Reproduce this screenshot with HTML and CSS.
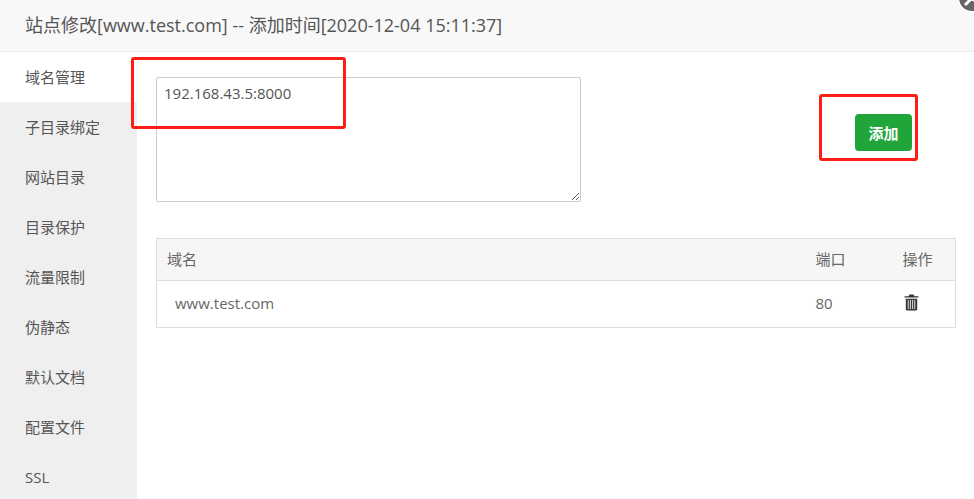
FILE: index.html
```html
<!DOCTYPE html>
<html lang="zh-CN">
<head>
    <meta charset="UTF-8">
    <title>站点修改</title>
    <link rel="stylesheet" href="styles.css">
</head>
<body>
    <div class="layer">
        <div class="layer-title">站点修改[www.test.com] -- 添加时间[2020-12-04 15:11:37]</div>
        <div class="layer-body">
            <ul class="side-menu">
                <li class="on">域名管理</li>
                <li>子目录绑定</li>
                <li>网站目录</li>
                <li>目录保护</li>
                <li>流量限制</li>
                <li>伪静态</li>
                <li>默认文档</li>
                <li>配置文件</li>
                <li>SSL</li>
            </ul>
            <div class="main">
                <div class="add-row">
                    <textarea class="domain-input">192.168.43.5:8000</textarea>
                    <button class="btn-add">添加</button>
                </div>
                <table class="domain-table">
                    <thead>
                        <tr>
                            <th class="col-name">域名</th>
                            <th class="col-port">端口</th>
                            <th class="col-op">操作</th>
                        </tr>
                    </thead>
                    <tbody>
                        <tr>
                            <td class="col-name"><span class="domain-link">www.test.com</span></td>
                            <td class="col-port">80</td>
                            <td class="col-op">
                                <svg class="trash" viewBox="0 0 14 16" width="15" height="17">
                                    <path d="M5 0.5h4l0.6 1.5H13.5v1.4H0.5V2H4.4z" fill="#333"/>
                                    <path d="M1.6 4.4h10.8V14.4a1.2 1.2 0 0 1-1.2 1.2H2.8a1.2 1.2 0 0 1-1.2-1.2z" fill="#3a3a3a"/>
                                    <path d="M4 5.6v8.6M6 5.6v8.6M8 5.6v8.6M10 5.6v8.6" stroke="#ccc" stroke-width="1"/>
                                </svg>
                            </td>
                        </tr>
                    </tbody>
                </table>
            </div>
        </div>
        <div class="mark mark-input"></div>
        <div class="mark mark-btn"></div>
        <div class="close-btn">
            <svg viewBox="0 0 30 30" width="30" height="30">
                <path d="M8 8L22 22M22 8L8 22" stroke="#fff" stroke-width="3"/>
            </svg>
        </div>
    </div>
</body>
</html>
```

FILE: styles.css
```css
* {
    box-sizing: border-box;
}

html, body {
    margin: 0;
    height: 100%;
    overflow: hidden;
}

body {
    background-color: #fff;
    color: #666;
    font-family: "Open Sans", "Noto Sans CJK SC", sans-serif;
    font-size: 15px;
}

.layer {
    position: relative;
    height: 499px;
    overflow: hidden;
}

.layer-title {
    height: 52px;
    line-height: 51px;
    padding-left: 25px;
    background-color: #f8f8f8;
    border-bottom: 1px solid #eee;
    color: #555;
    font-size: 18px;
}

.layer-body {
    display: flex;
    height: 447px;
}

.side-menu {
    width: 137px;
    margin: 0;
    padding: 0;
    list-style: none;
    background-color: #efefef;
    flex-shrink: 0;
}

.side-menu li {
    height: 50px;
    line-height: 51px;
    padding-left: 25px;
    color: #555;
}

.side-menu li.on {
    background-color: #fff;
}

.main {
    flex: 1;
    padding: 25px 18px 0 19px;
}

.add-row {
    display: flex;
    height: 125px;
}

.domain-input {
    width: 425px;
    height: 125px;
    padding: 3px 7px;
    border: 1px solid #ccc;
    border-radius: 2px;
    color: #555;
    font-family: inherit;
    font-size: 15px;
    line-height: 24px;
    outline: none;
}

.btn-add {
    width: 57px;
    height: 37px;
    margin: 37px 0 0 274px;
    padding: 0;
    border: 0;
    border-radius: 4px;
    background-color: #20a53a;
    color: #fff;
    font-family: inherit;
    font-size: 15px;
    font-weight: 700;
}

.domain-table {
    width: 800px;
    margin-top: 36px;
    border-collapse: collapse;
    border: 1px solid #ddd;
    table-layout: fixed;
}

.domain-table th {
    height: 42px;
    padding: 0 10px 2px;
    background-color: #f6f6f6;
    border-bottom: 1px solid #ddd;
    color: #666;
    font-weight: 400;
    text-align: left;
}

.domain-table td {
    height: 47px;
    padding: 0 10px 2px;
    color: #666;
}

.domain-table .col-port {
    width: 88px;
    padding-left: 11px;
}

.domain-table .col-op {
    width: 63px;
    padding-left: 10px;
}

.domain-link {
    margin-left: 8px;
}

.trash {
    display: block;
    margin: -1px 0 0 1px;
}

.mark {
    position: absolute;
    border: 3px solid #fb1f15;
    border-radius: 3px;
}

.mark-input {
    left: 131px;
    top: 57px;
    width: 215px;
    height: 72px;
}

.mark-btn {
    left: 819px;
    top: 94px;
    width: 99px;
    height: 67px;
}

.close-btn {
    position: absolute;
    left: 957px;
    top: -17px;
    width: 30px;
    height: 30px;
    background-color: #666;
    border: 2px solid #fff;
    border-radius: 50%;
    display: flex;
    align-items: center;
    justify-content: center;
}

.close-btn svg {
    flex-shrink: 0;
}
```
